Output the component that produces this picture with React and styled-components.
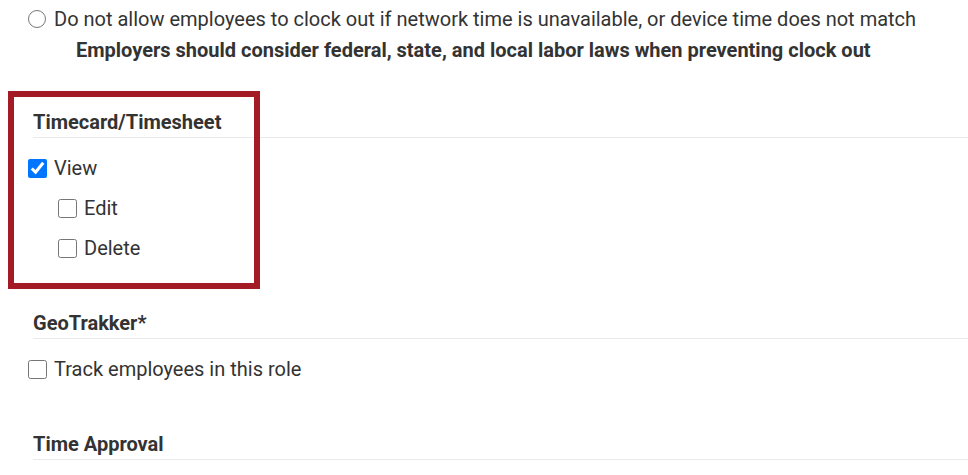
import React from 'react';
import styled, { createGlobalStyle } from 'styled-components';

const GlobalStyle = createGlobalStyle`
  html, body {
    margin: 0;
    padding: 0;
    background: #fff;
  }
  body {
    font-family: Roboto, "Liberation Sans", sans-serif;
    color: #333;
  }
`;

const Page = styled.div`
  position: relative;
  width: 968px;
  height: 475px;
  overflow: hidden;
  padding-top: 4px;
  box-sizing: border-box;
`;

const OptionRow = styled.label`
  display: flex;
  align-items: center;
  gap: 8px;
  height: 30px;
  padding-left: ${p => p.indent || 28}px;
  font-size: 20px;
  color: #333;
`;

const Note = styled.div`
  margin-top: 1px;
  height: 30px;
  line-height: 30px;
  padding-left: 76px;
  font-size: 20px;
  font-weight: 700;
  color: #333;
`;

const Section = styled.section`
  margin-top: ${p => p.top}px;
`;

const Heading = styled.h3`
  margin: 0 0 0 33px;
  padding-bottom: 3px;
  line-height: 24px;
  font-size: 20px;
  font-weight: 700;
  color: #333;
  border-bottom: 1px solid #e9eaec;
`;

const List = styled.div`
  padding-top: 10px;
`;

const CheckRow = styled.label`
  display: flex;
  align-items: center;
  gap: 7px;
  height: 40px;
  padding-left: ${p => 28 + (p.level || 0) * 30}px;
  font-size: 20px;
  color: #333;
`;

const Box = styled.input.attrs({ type: 'checkbox' })`
  width: 19px;
  height: 19px;
  margin: 0;
  accent-color: #0075ff;
`;

const Radio = styled.input.attrs({ type: 'radio' })`
  width: 18px;
  height: 18px;
  margin: 0;
`;

const Highlight = styled.div`
  position: absolute;
  left: 8px;
  top: 91px;
  width: 252px;
  height: 198px;
  box-sizing: border-box;
  border: 6px solid #a31b25;
  pointer-events: none;
`;

export default function App() {
  return (
    <>
      <GlobalStyle />
      <Page>
        <OptionRow>
          <Radio name="clockout" readOnly />
          Do not allow employees to clock out if network time is unavailable, or device time does not match
        </OptionRow>
        <Note>Employers should consider federal, state, and local labor laws when preventing clock out</Note>

        <Section top={45}>
          <Heading>Timecard/Timesheet</Heading>
          <List>
            <CheckRow><Box defaultChecked />View</CheckRow>
            <CheckRow level={1}><Box />Edit</CheckRow>
            <CheckRow level={1}><Box />Delete</CheckRow>
          </List>
        </Section>

        <Section top={43}>
          <Heading>GeoTrakker*</Heading>
          <List>
            <CheckRow><Box />Track employees in this role</CheckRow>
          </List>
        </Section>

        <Section top={43}>
          <Heading>Time Approval</Heading>
        </Section>

        <Highlight />
      </Page>
    </>
  );
}
